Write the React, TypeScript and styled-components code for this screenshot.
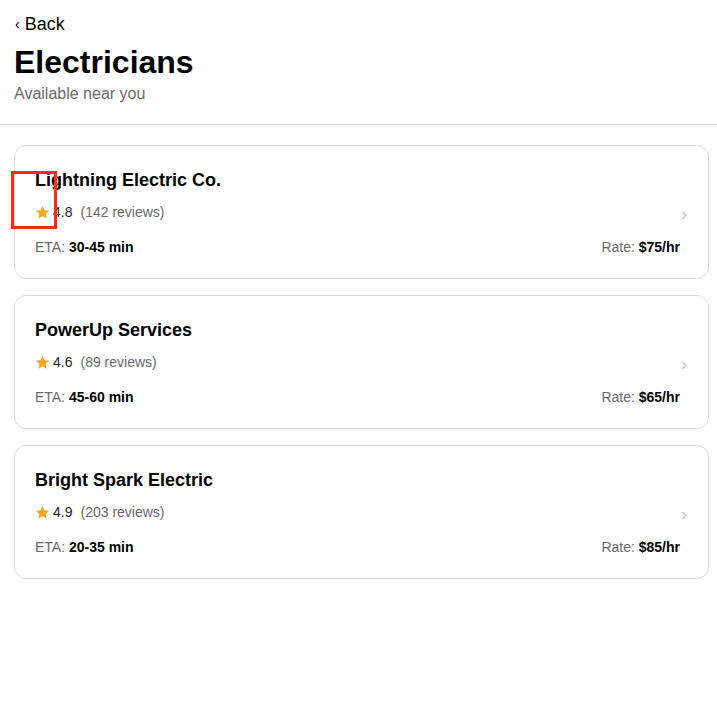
import * as React from 'react'
import styled, { createGlobalStyle } from 'styled-components'

const GlobalStyle = createGlobalStyle`
  body {
    margin: 0;
    background: #fff;
    font-family: "Liberation Sans", Arial, sans-serif;
    color: #000;
  }
`

const Page = styled.div`
  width: 100%;
`

const Header = styled.header`
  padding: 14px 14px 20px;
  border-bottom: 1px solid #dedede;
`

const BackButton = styled.button`
  display: flex;
  align-items: center;
  gap: 5px;
  padding: 0 0 0 1px;
  border: 0;
  background: none;
  font: inherit;
  font-size: 18px;
  line-height: 20px;
  color: #000;
  cursor: pointer;
`

const BackArrow = styled.span`
  font-size: 14px;
`

const Title = styled.h1`
  margin: 9px 0 0;
  font-size: 32px;
  line-height: 38px;
  font-weight: 700;
`

const Subtitle = styled.p`
  margin: 3px 0 0;
  font-size: 16px;
  line-height: 20px;
  color: #6b6b6b;
`

const List = styled.div`
  display: flex;
  flex-direction: column;
  gap: 16px;
  padding: 20px 8px 20px 14px;
`

const Card = styled.div`
  position: relative;
  display: flex;
  align-items: center;
  gap: 1px;
  padding: 20px 21px 21px 20px;
  border: 1px solid #dcdcdc;
  border-radius: 12px;
  background: #fff;
`

const Info = styled.div`
  flex: 1;
  display: flex;
  flex-direction: column;
`

const Name = styled.div`
  font-size: 18px;
  line-height: 28px;
  font-weight: 700;
`

const RatingRow = styled.div`
  display: flex;
  align-items: center;
  margin-top: 8px;
  font-size: 14px;
  line-height: 20px;
`

const Score = styled.span`
  margin-left: 3px;
  color: #222;
`

const Reviews = styled.span`
  margin-left: 8px;
  color: #6b6b6b;
`

const Footer = styled.div`
  display: flex;
  justify-content: space-between;
  margin-top: 15px;
  font-size: 14px;
  line-height: 20px;
`

const Label = styled.span`
  color: #6b6b6b;
`

const Value = styled.strong`
  color: #000;
  font-weight: 700;
`

const Chevron = styled.span`
  font-size: 18px;
  line-height: 20px;
  color: #c4c4c4;
  margin-top: 4px;
`

const Highlight = styled.div`
  position: absolute;
  left: -4px;
  top: 25px;
  width: 40px;
  height: 52px;
  border: 3px solid #ff2a0a;
  pointer-events: none;
`

const Star = () => (
  <svg width="15" height="15" viewBox="0 0 24 24">
    <path
      fill="#f5a623"
      d="M12 1.5l3.1 7 7.6.8-5.7 5.1 1.6 7.5L12 18.1 5.4 21.9l1.6-7.5L1.3 9.3l7.6-.8z"
    />
  </svg>
)

const electricians = [
  { name: 'Lightning Electric Co.', rating: '4.8', reviews: 142, eta: '30-45 min', rate: '$75/hr' },
  { name: 'PowerUp Services', rating: '4.6', reviews: 89, eta: '45-60 min', rate: '$65/hr' },
  { name: 'Bright Spark Electric', rating: '4.9', reviews: 203, eta: '20-35 min', rate: '$85/hr' }
]

export default function App () {
  return (
    <Page>
      <GlobalStyle />
      <Header>
        <BackButton>
          <BackArrow>‹</BackArrow>
          Back
        </BackButton>
        <Title>Electricians</Title>
        <Subtitle>Available near you</Subtitle>
      </Header>
      <List>
        {electricians.map((e, i) => (
          <Card key={e.name}>
            {i === 0 && <Highlight />}
            <Info>
              <Name>{e.name}</Name>
              <RatingRow>
                <Star />
                <Score>{e.rating}</Score>
                <Reviews>({e.reviews} reviews)</Reviews>
              </RatingRow>
              <Footer>
                <span><Label>ETA: </Label><Value>{e.eta}</Value></span>
                <span><Label>Rate: </Label><Value>{e.rate}</Value></span>
              </Footer>
            </Info>
            <Chevron>›</Chevron>
          </Card>
        ))}
      </List>
    </Page>
  )
}
